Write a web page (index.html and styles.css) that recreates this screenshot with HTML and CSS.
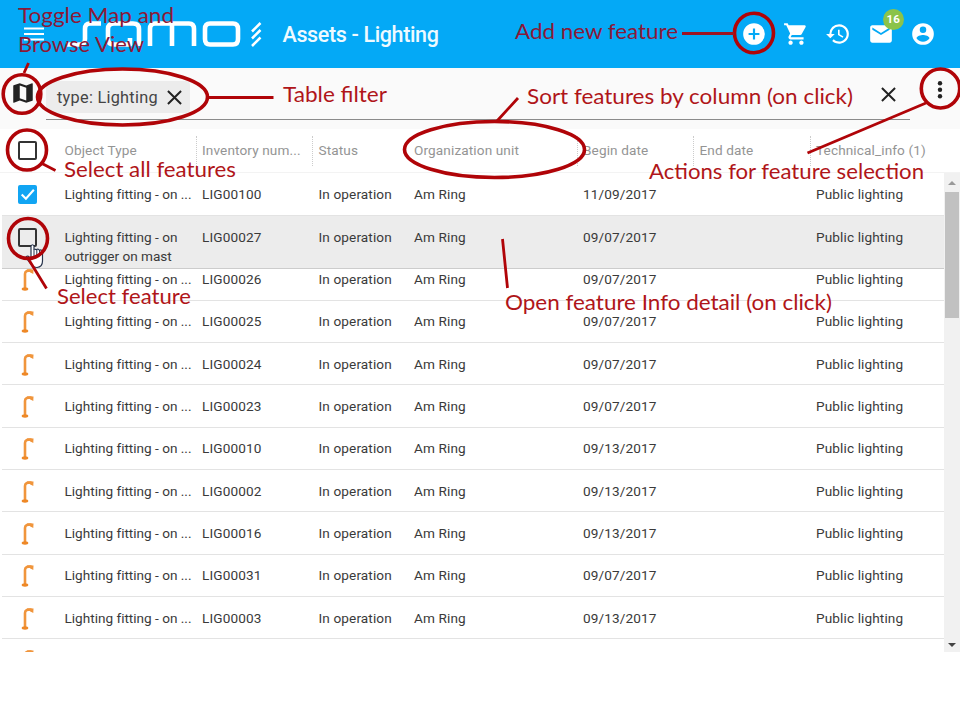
FILE: index.html
```
<!DOCTYPE html>
<html lang="en">
<head>
<meta charset="utf-8">
<title>Assets - Lighting</title>
<link rel="stylesheet" href="styles.css">
</head>
<body>
<svg class="defs" width="0" height="0" aria-hidden="true">
  <symbol id="lamp" viewBox="0 0 14 26"><path d="M4 22V8Q4 4.200 10.500 4.500" fill="none" stroke="#f0953c" stroke-width="2.600"/><path d="M5.500 3.200 12.500 3.400 12.300 8 9.400 6.500Z" fill="#f0953c"/><ellipse cx="4" cy="23" rx="3.300" ry="1.700" fill="#ee8826"/></symbol>
</svg>
<header class="topbar">
  <svg class="menu" viewBox="0 0 20 14"><path d="M0 1.500h20M0 7h20M0 12.500h20" stroke="#fff" stroke-width="1.800"/></svg>
  <svg class="logo" viewBox="66 16 200 36" fill="none" stroke="#fff" stroke-width="4.600" stroke-linejoin="round">
    <path d="M66 44.500H80Q85 44.500 85 39V29Q85 23.500 90 23.500H101M130 38V44.500H114Q108 44.500 108 39V29Q108 23.500 114 23.500H133Q139 23.500 139 29V46M150 46V29Q150 23.500 155 23.500H189Q194 23.500 194 29V46M172 24V46M210 23.500H233Q238 23.500 238 29V39Q238 44.500 233 44.500H210Q205 44.500 205 39V29Q205 23.500 210 23.500Z"/>
    <path d="M252 31.500 260.500 23M252 38.500 260.500 30M252 46 260.500 37.500" stroke-width="2.500"/>
  </svg>
  <h1>Assets - Lighting</h1>
  <nav class="actions">
    <svg viewBox="0 0 24 24"><path d="M12 2a10 10 0 1 0 0 20 10 10 0 0 0 0-20zm5 11h-4v4h-2v-4H7v-2h4V7h2v4h4z"/></svg>
    <svg viewBox="0 0 24 24"><path d="M7 18c-1.100 0-1.990.9-1.990 2S5.900 22 7 22s2-.9 2-2-.9-2-2-2zM1 2v2h2l3.600 7.590-1.350 2.450c-.16.280-.25.610-.25.960 0 1.100.9 2 2 2h12v-2H7.420c-.14 0-.25-.11-.25-.25l.03-.12.9-1.630h7.450c.75 0 1.410-.41 1.750-1.030l3.580-6.490A1 1 0 0 0 20 4H5.210l-.94-2zm16 16c-1.100 0-1.990.9-1.990 2s.89 2 1.990 2 2-.9 2-2-.9-2-2-2z"/></svg>
    <svg viewBox="0 0 24 24"><path d="M13 3a9 9 0 0 0-9 9H1l3.890 3.890.07.14L9 12H6c0-3.870 3.130-7 7-7s7 3.130 7 7-3.130 7-7 7c-1.930 0-3.680-.79-4.940-2.060l-1.420 1.420A9 9 0 1 0 13 3zm-1 5v5l4.280 2.540.72-1.210-3.500-2.080V8z"/></svg>
    <span class="mail"><svg viewBox="0 0 24 24"><path d="M20 4H4c-1.100 0-2 .9-2 2v12c0 1.100.9 2 2 2h16c1.100 0 2-.9 2-2V6c0-1.100-.9-2-2-2zm0 4-8 5-8-5V6l8 5 8-5z"/></svg><b class="badge">16</b></span>
    <svg viewBox="0 0 24 24"><path d="M12 2a10 10 0 1 0 0 20 10 10 0 0 0 0-20zm0 3a3 3 0 1 1 0 6 3 3 0 0 1 0-6zm0 14.200a7.200 7.200 0 0 1-6-3.220c.03-1.990 4-3.080 6-3.080s5.970 1.090 6 3.080a7.200 7.200 0 0 1-6 3.220z"/></svg>
  </nav>
</header>
<section class="filterbar">
  <svg class="mapicon" viewBox="0 0 24 24"><path d="M20.500 3l-.16.030L15 5.100 9 3 3.360 4.900c-.21.070-.36.250-.36.480V20.500c0 .28.220.5.500.5l.16-.03L9 18.900l6 2.100 5.640-1.900c.21-.07.360-.25.360-.48V3.500c0-.28-.22-.5-.5-.5zM15 19l-6-2.110V5l6 2.110z"/></svg>
  <div class="field">
    <div class="chip"><span>type: Lighting</span><svg class="x" viewBox="0 0 16 16"><path d="M1 1 15 15M15 1 1 15"/></svg></div>
    <svg class="x clear" viewBox="0 0 16 16"><path d="M1 1 15 15M15 1 1 15"/></svg>
  </div>
  <svg class="more" viewBox="0 0 6 18"><circle cx="3" cy="2.300" r="2.200"/><circle cx="3" cy="8.800" r="2.200"/><circle cx="3" cy="15.300" r="2.200"/></svg>
</section>
<main class="table">
  <div class="thead"><span class="box"></span><span>Object Type</span><span>Inventory num...</span><span>Status</span><span class="nosep">Organization unit</span><span>Begin date</span><span>End date</span><span>Technical_info (1)</span></div>
  <div class="scroller">
    <div class="rows" id="rows"></div>
    <div class="scrollbar"><i class="up"></i><i class="thumb"></i><i class="down"></i></div>
  </div>
</main>
<svg class="notes" viewBox="0 0 960 720">
  <path d="M31 246V259L28 256Q25.500 256 26.500 258.500L31 264Q33 267.500 37 267.500 42.500 267 42.500 261V251.500Q41.500 249 39.500 250.500 38.500 248.500 36.500 249.500L34 249V246Q32.500 243.500 31 246Z" fill="#fff" stroke="#28344c" stroke-width="1.200"/>
  <path d="M34 249V256M36.800 250V256M39.600 251V256" stroke="#28344c" fill="none"/>
  <g class="rings">
    <ellipse cx="22" cy="94" rx="18.800" ry="19.300"/>
    <ellipse cx="122.500" cy="97" rx="85" ry="28"/>
    <ellipse cx="27" cy="150" rx="19.500" ry="20"/>
    <ellipse cx="28" cy="238.500" rx="19.500" ry="20"/>
    <ellipse cx="494.500" cy="149.500" rx="90" ry="28"/>
    <ellipse cx="754" cy="33" rx="19.500" ry="19.700"/>
    <ellipse cx="940.500" cy="88.500" rx="19.200" ry="19.500"/>
  </g>
  <path class="lines" d="M24 73 28.500 63M208 97.500H273.500M42 163.500 55.500 170.500M29 260 46.500 288.500M497 121 518 98M502.500 239 507.500 288M807.500 153 926 103"/>
  <path class="lines head" d="M682 33.500H734"/>
  <g class="head">
    <text x="18" y="23" textLength="156" lengthAdjust="spacingAndGlyphs">Toggle Map and</text>
    <text x="18" y="52" textLength="126" lengthAdjust="spacingAndGlyphs">Browse View</text>
    <text x="515" y="39" textLength="163" lengthAdjust="spacingAndGlyphs">Add new feature</text>
  </g>
  <g>
    <text x="283" y="102" textLength="104" lengthAdjust="spacingAndGlyphs">Table filter</text>
    <text x="527" y="104" textLength="326" lengthAdjust="spacingAndGlyphs">Sort features by column (on click)</text>
    <text x="64" y="177" textLength="172" lengthAdjust="spacingAndGlyphs">Select all features</text>
    <text x="57" y="304" textLength="134" lengthAdjust="spacingAndGlyphs">Select feature</text>
    <text x="649" y="179" textLength="275" lengthAdjust="spacingAndGlyphs">Actions for feature selection</text>
    <text x="505" y="310" textLength="327" lengthAdjust="spacingAndGlyphs">Open feature Info detail (on click)</text>
  </g>
</svg>
<script src="app.js"></script>
</body>
</html>
```
FILE: app.js
```
const items = [
  ["LIG00100", "11/09/2017"], ["LIG00027", "09/07/2017"], ["LIG00026", "09/07/2017"],
  ["LIG00025", "09/07/2017"], ["LIG00024", "09/07/2017"], ["LIG00023", "09/07/2017"],
  ["LIG00010", "09/13/2017"], ["LIG00002", "09/13/2017"], ["LIG00016", "09/13/2017"],
  ["LIG00031", "09/07/2017"], ["LIG00003", "09/13/2017"]
];
const lamp = '<svg class="lamp"><use href="#lamp"/></svg>';
const check = '<span class="box checked"><svg viewBox="0 0 18 18"><path d="M3.500 9 7.500 13 15 4.500"/></svg></span>';
const lead = i => i === 0 ? check : i === 1 ? '<span class="box"></span>' : lamp;
document.getElementById("rows").innerHTML = items.map(([id, date], i) =>
  `<div class="row${i === 1 ? " hover" : ""}">${lead(i)}<span class="type">${i === 1 ? "Lighting fitting - on<br>outrigger on mast" : "Lighting fitting - on ..."}</span><span>${id}</span><span>In operation</span><span>Am Ring</span><span>${date}</span><span></span><span>Public lighting</span></div>`
).join("") + `<div class="row last">${lamp}</div>`;
```
FILE: styles.css
```
* { box-sizing: border-box; }
body { margin: 0; width: 960px; height: 720px; overflow: hidden; position: relative; background: #fff; font-family: Roboto, sans-serif; }
svg { display: block; flex: none; }
.defs { position: absolute; }
.topbar { height: 68px; background: #04a9f6; display: flex; align-items: center; padding: 0 24px; }
.menu { width: 20px; height: 14px; }
.logo { width: 200px; height: 36px; margin-left: 22px; }
h1 { margin: 0 0 0 16.500px; color: #eefaff; font-size: 21.500px; font-weight: 500; letter-spacing: -.36px; white-space: nowrap; }
.actions { margin-left: auto; height: 26px; display: flex; gap: 16.300px; }
.actions svg { width: 26px; height: 26px; fill: #fff; }
.mail { position: relative; }
.badge { position: absolute; left: 15px; top: -12.500px; width: 21px; height: 21px; border-radius: 50%; background: #8bc34a; color: #fff; font-size: 11.500px; line-height: 21px; text-align: center; }
.filterbar { height: 61px; background: #fafafa; display: flex; align-items: flex-start; }
.mapicon { width: 26px; height: 26px; margin: 12px 0 0 10px; fill: #222; }
.field { width: 864px; height: 52px; margin-left: 10px; border-bottom: 1px solid #8b8b8b; display: flex; justify-content: space-between; align-items: flex-start; }
.chip { margin-top: 13px; height: 32px; width: 144px; border-radius: 4px; background: #ececec; display: flex; align-items: center; justify-content: space-between; padding: 0 8px 0 11px; font-size: 16.300px; letter-spacing: .27px; color: #444; white-space: nowrap; }
.x { width: 15px; height: 15px; stroke: #222; stroke-width: 2.100; }
.clear { margin: 19px 14px 0 0; }
.more { width: 6px; height: 18px; margin: 13px 0 0 27px; fill: #222; }
.thead, .row { display: grid; grid-template-columns: 62.500px 137.500px 116.500px 95.500px 169px 116.500px 116.500px 1fr; font-size: 13.600px; letter-spacing: .12px; color: #3a3a3a; white-space: nowrap; }
.thead { height: 44px; padding-left: 2px; color: #949494; border-bottom: 1px solid #f3f3f3; }
.thead > span:not(.box) { position: relative; line-height: 42px; }
.thead > span:nth-child(n+3):not(.nosep)::before { content: ""; position: absolute; left: -6.500px; top: 7px; height: 30px; border-left: 1px dotted #ccc; }
.box { width: 19px; height: 19px; border: 2px solid #333; border-radius: 2px; margin: 12px 0 0 15.500px; }
.scroller { height: 479px; display: flex; overflow: hidden; }
.rows { width: 944px; padding: .5px 0 0 2px; }
.row { height: 42.350px; border-bottom: 1px solid #e3e3e3; line-height: 19px; padding-top: 11.700px; }
.type { letter-spacing: -.01px; }
.row .box { margin-top: 0; }
.row .checked { border: 0; background: #11a5f3; }
.checked path { fill: none; stroke: #fff; stroke-width: 2; }
.hover { position: relative; height: 53.500px; margin-bottom: -11.150px; background: #ececec; border-bottom-color: #ccc; }
.lamp { width: 14px; height: 26px; margin: -4px 0 0 19px; }
.last { border: 0; }
.scrollbar { width: 16px; background: #f1f1f1; display: flex; flex-direction: column; align-items: center; }
.up, .down { border: 4px solid transparent; }
.up { border-top: 0; border-bottom: 4px solid #999; margin-top: 8px; }
.thumb { width: 14px; height: 126px; margin-top: 7px; background: #c1c1c1; }
.down { border-bottom: 0; border-top: 4px solid #444; margin-top: auto; margin-bottom: 5px; }
.notes { position: absolute; inset: 0; width: 960px; height: 720px; pointer-events: none; font-family: Lato, sans-serif; font-size: 21px; fill: #b01519; }
.rings { fill: none; stroke: #b00408; stroke-width: 3.600; }
.lines { fill: none; stroke: #b00408; stroke-width: 2.800; }
.lines.head { stroke: #9d1424; }
.head { fill: #8b1838; }
```
